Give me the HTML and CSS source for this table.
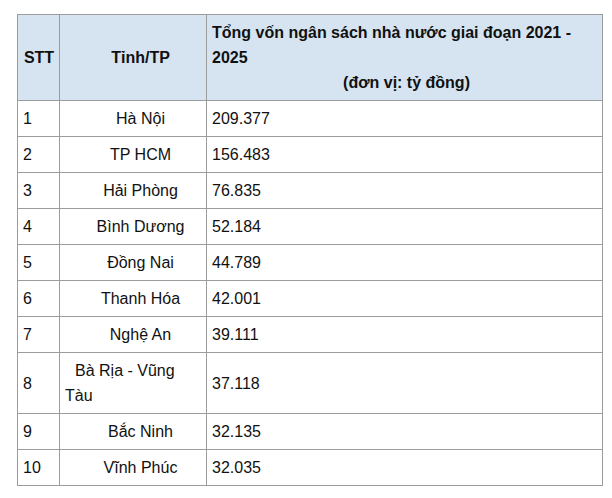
FILE: index.html
```html
<!DOCTYPE html>
<html lang="vi">
<head>
<meta charset="utf-8">
<link rel="stylesheet" href="styles.css">
</head>
<body>
<table class="budget">
  <colgroup>
    <col class="col-stt">
    <col class="col-name">
    <col class="col-val">
  </colgroup>
  <thead>
    <tr>
      <th class="c-stt">STT</th>
      <th class="c-name">Tỉnh/TP</th>
      <th class="c-val">Tổng vốn ngân sách nhà nước giai đoạn 2021 - 2025<span class="unit">(đơn vị: tỷ đồng)</span></th>
    </tr>
  </thead>
  <tbody>
    <tr><td>1</td><td class="name">Hà Nội</td><td>209.377</td></tr>
    <tr><td>2</td><td class="name">TP HCM</td><td>156.483</td></tr>
    <tr><td>3</td><td class="name">Hải Phòng</td><td>76.835</td></tr>
    <tr><td>4</td><td class="name">Bình Dương</td><td>52.184</td></tr>
    <tr><td>5</td><td class="name">Đồng Nai</td><td>44.789</td></tr>
    <tr><td>6</td><td class="name">Thanh Hóa</td><td>42.001</td></tr>
    <tr><td>7</td><td class="name">Nghệ An</td><td>39.111</td></tr>
    <tr><td>8</td><td class="name name-left">Bà Rịa - Vũng Tàu</td><td>37.118</td></tr>
    <tr><td>9</td><td class="name">Bắc Ninh</td><td>32.135</td></tr>
    <tr><td>10</td><td class="name">Vĩnh Phúc</td><td>32.035</td></tr>
  </tbody>
</table>
</body>
</html>
```

FILE: styles.css
```css
html, body {
  margin: 0;
  padding: 0;
  background: #ffffff;
}

body {
  font-family: "Liberation Sans", Arial, sans-serif;
  font-size: 16px;
  color: #111111;
}

.budget {
  border-collapse: collapse;
  margin: 14px 0 0 17px;
  width: 585px;
  table-layout: fixed;
}

.col-stt { width: 42px; }
.col-name { width: 147px; }
.col-val { width: 396px; }

.budget th,
.budget td {
  border: 1px solid #9c9c9c;
  padding: 5px;
  line-height: 25px;
  vertical-align: middle;
  text-align: left;
}

.budget thead th {
  background: #d6e4f1;
  font-weight: bold;
}

.budget .c-stt {
  text-align: center;
  padding-left: 3px;
  padding-right: 2px;
}

.budget .c-name {
  text-align: center;
  padding-left: 20px;
}

.unit {
  display: block;
  text-align: center;
  padding-left: 4px;
}

.budget td.name {
  text-align: center;
  padding-left: 20px;
}

.budget td.name-left {
  text-align: left;
  padding-left: 5px;
  text-indent: 10px;
}
```
